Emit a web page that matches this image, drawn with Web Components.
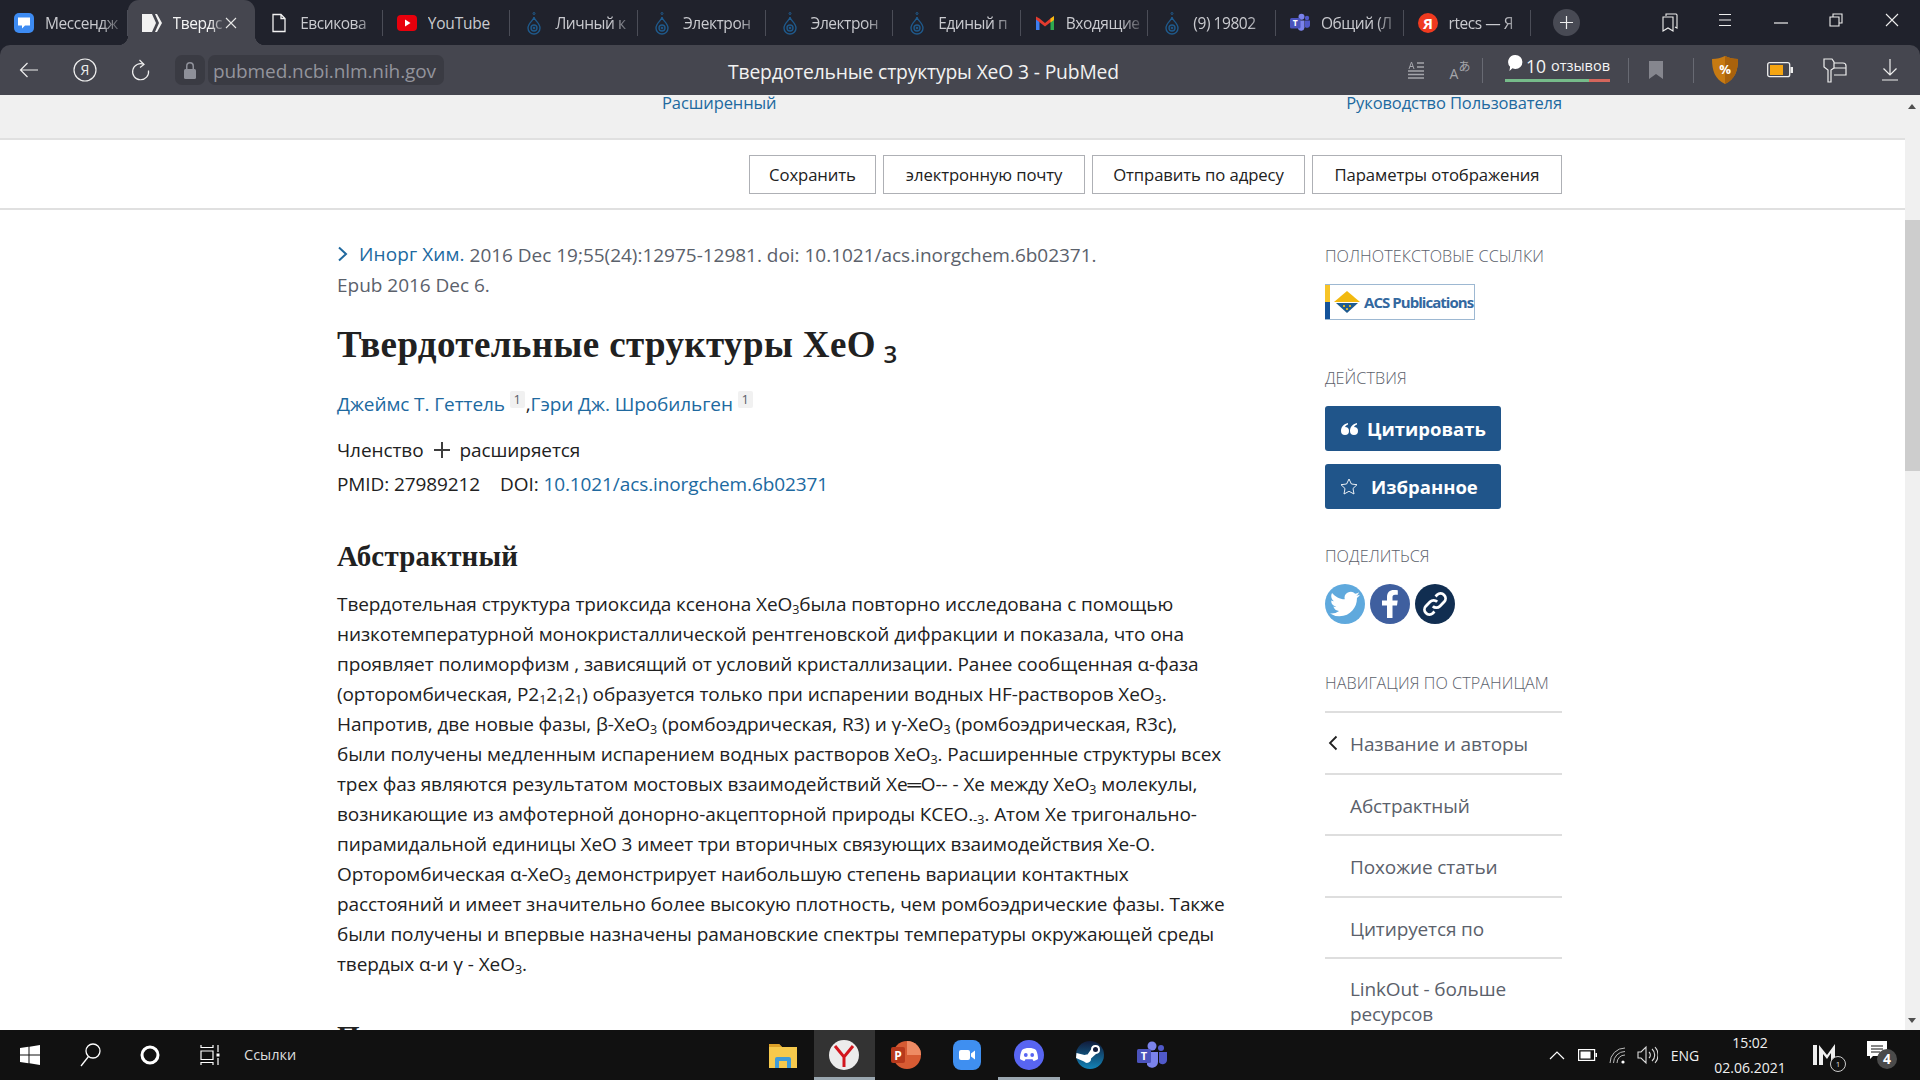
<!DOCTYPE html>
<html lang="ru">
<head>
<meta charset="utf-8">
<title>Твердотельные структуры XeO 3 - PubMed</title>
<style>
  html, body { margin: 0; height: 100%; overflow: hidden; }
  body { display: flex; flex-direction: column; width: 1920px; height: 1080px; font-family: "Open Sans", "Noto Sans", sans-serif; }
  svg { display: block; }
</style>
</head>
<body>

<tab-strip>
  <browser-tab label="Мессендж">
    <svg slot="icon" width="20" height="20" viewBox="0 0 20 20"><rect width="20" height="20" rx="5" fill="#3d8bf2"/><path d="M4 4.500h12v8h-5l-3 3v-3H4z" fill="#fff"/></svg>
  </browser-tab>
  <browser-tab label="Твердс" active>
    <svg slot="icon" width="20" height="20" viewBox="0 0 20 20"><path d="M0 1h10l4 9-4 9H0z" fill="#f2f2f2"/><path d="M13 1h2l5 9-5 9h-2l4-9z" fill="#f2f2f2"/></svg>
  </browser-tab>
  <browser-tab label="Евсикова">
    <svg slot="icon" width="20" height="20" viewBox="0 0 20 20"><path d="M4 1.500h8l4 4v13H4z M12 1.500v4h4" fill="none" stroke="#f2f2f2" stroke-width="1.300"/></svg>
  </browser-tab>
  <browser-tab label="YouTube" plain>
    <svg slot="icon" width="20" height="20" viewBox="0 0 20 20"><rect y="2" width="20" height="16" rx="4" fill="#e8000c"/><path d="M8 6.500l5.500 3.500L8 13.500z" fill="#fff"/></svg>
  </browser-tab>
  <browser-tab label="Личный к"><drop-icon slot="icon"></drop-icon></browser-tab>
  <browser-tab label="Электрон"><drop-icon slot="icon"></drop-icon></browser-tab>
  <browser-tab label="Электрон"><drop-icon slot="icon"></drop-icon></browser-tab>
  <browser-tab label="Единый п"><drop-icon slot="icon"></drop-icon></browser-tab>
  <browser-tab label="Входящие">
    <svg slot="icon" width="20" height="20" viewBox="0 0 20 20"><path d="M1 5v12h3.500V8z" fill="#3d7df0"/><path d="M19 5v12h-3.500V8z" fill="#2fa84f"/><path d="M1 3.500l3.500 2L10 10l5.500-4.500 3.500-2V6.500L10 13.500 1 6.500z" fill="#e33b2e"/><path d="M15.500 5.500L19 3v4l-3.500 2.500z" fill="#f6bb12"/></svg>
  </browser-tab>
  <browser-tab label="(9) 19802"><drop-icon slot="icon"></drop-icon></browser-tab>
  <browser-tab label="Общий (Л">
    <svg slot="icon" width="20" height="20" viewBox="0 0 20 20"><circle cx="11.500" cy="3.800" r="3" fill="#7b83eb"/><circle cx="17" cy="5" r="2.200" fill="#5059c9"/><path d="M8 7.500h6.500v7a3.500 3.500 0 0 1-6.500 1.500z" fill="#7b83eb"/><path d="M15 7.500h5v5a3 3 0 0 1-5 1.500z" fill="#5059c9"/><rect y="5" width="10.500" height="10.500" rx="1.500" fill="#4b53bc"/><text x="5.200" y="13" font-size="8.500" font-weight="700" fill="#fff" text-anchor="middle" font-family="Open Sans">T</text></svg>
  </browser-tab>
  <browser-tab label="rtecs — Я">
    <svg slot="icon" width="20" height="20" viewBox="0 0 20 20"><circle cx="10" cy="10" r="10" fill="#f03a1f"/><text x="10" y="15.500" font-size="15" font-weight="700" fill="#fff" text-anchor="middle" font-family="Open Sans">Я</text></svg>
  </browser-tab>
</tab-strip>

<address-bar title-text="Твердотельные структуры XeO 3 - PubMed" url="pubmed.ncbi.nlm.nih.gov"></address-bar>

<page-viewport>
  <site-header></site-header>
  <action-toolbar>
    <tool-button style="padding:0 19.500px">Сохранить</tool-button>
    <tool-button>электронную почту</tool-button>
    <tool-button style="padding:0 20.300px">Отправить по адресу</tool-button>
    <tool-button>Параметры отображения</tool-button>
  </action-toolbar>
  <article-layout>
    <article-main></article-main>
    <article-side></article-side>
  </article-layout>
</page-viewport>

<task-bar></task-bar>

<script>
// small svg drop used by the portal favicon tabs
class DropIcon extends HTMLElement {
  constructor() {
    super();
    this.attachShadow({ mode: 'open' }).innerHTML = `
      <style>:host { display: block; width: 20px; height: 24px; }</style>
      <svg width="20" height="24" viewBox="0 0 20 24" fill="none" stroke="#1f5a8c" style="display:block">
        <path d="M10 6c0 3 6 6 6 11a6 6 0 0 1-12 0c0-5 6-8 6-11z" stroke-width="1.400"/>
        <circle cx="10" cy="17" r="3" stroke-width="1.400"/>
        <circle cx="10" cy="17" r=".9" fill="#1f5a8c"/>
        <circle cx="10" cy="2.500" r="1" stroke-width="1"/>
      </svg>`;
  }
}

class BrowserTab extends HTMLElement {
  constructor() {
    super();
    this.attachShadow({ mode: 'open' });
  }
  connectedCallback() {
    const active = this.hasAttribute('active');
    this.shadowRoot.innerHTML = `
      <style>
        :host { display: flex; align-items: center; width: 127.6px; height: 45px; box-sizing: border-box; position: relative; flex: none; }
        :host([active]) { background: #45464f; border-radius: 11px 11px 0 0; }
        :host([active])::before, :host([active])::after { content: ''; position: absolute; bottom: 0; width: 10px; height: 10px; }
        :host([active])::before { left: -10px; background: radial-gradient(circle at 0 0, transparent 10px, #45464f 10.500px); }
        :host([active])::after { right: -10px; background: radial-gradient(circle at 100% 0, transparent 10px, #45464f 10.500px); }
        .inner { display: flex; align-items: center; width: 100%; height: 26px; padding-left: 14px; box-sizing: border-box; border-right: 1px solid #4b4d57; }
        :host([active]) .inner { border-right-color: transparent; }
        .icon { width: 22px; flex: none; margin-right: 9px; }
        .label { font-size: 15.500px; color: #c9cacf; white-space: nowrap; overflow: hidden; flex: 1; letter-spacing: -.45px; margin-right: 5px;
          -webkit-mask-image: linear-gradient(90deg, #000 72%, rgba(0,0,0,.2) 100%); mask-image: linear-gradient(90deg, #000 72%, rgba(0,0,0,.2) 100%); }
        :host([plain]) .label { -webkit-mask-image: none; mask-image: none; letter-spacing: -.2px; }
        :host([active]) .label { color: #f4f4f4; margin-right: 1px; }
        .close { flex: none; margin: 0 17px 0 0; }
      </style>
      <div class="inner">
        <div class="icon"><slot name="icon"></slot></div>
        <div class="label">${this.getAttribute('label')}</div>
        ${active ? '<svg class="close" width="12" height="12" viewBox="0 0 12 12" stroke="#e8e8e8" stroke-width="1.100"><path d="M1 1l10 10M11 1L1 11"/></svg>' : ''}
      </div>`;
  }
}

class TabStrip extends HTMLElement {
  constructor() {
    super();
    this.attachShadow({ mode: 'open' }).innerHTML = `
      <style>
        :host { display: flex; align-items: center; height: 45px; background: #20222c; flex: none; }
        .tabs { display: flex; width: 1531px; flex: none; }
        .plus { width: 27px; height: 27px; border-radius: 50%; background: #484a54; margin-left: 22px; display: flex; align-items: center; justify-content: center; flex: none; }
        .win { display: flex; margin-left: 62px; }
        .win div { width: 55.500px; display: flex; justify-content: center; }
      </style>
      <div class="tabs"><slot></slot></div>
      <div class="plus"><svg width="15" height="15" viewBox="0 0 15 15" stroke="#eee" stroke-width="1.200"><path d="M7.500 1v13M1 7.500h13"/></svg></div>
      <div class="win">
        <div><svg width="18" height="20" viewBox="0 0 18 20" fill="none" stroke="#eee" stroke-width="1.100"><path d="M5 3V1h10a2 2 0 0 1 1 1v13l-2-1"/><path d="M2 4h10v14l-5-3-5 3z"/></svg></div>
        <div><svg width="14" height="14" viewBox="0 0 14 14" stroke="#eee" stroke-width="1.100"><path d="M1 1.500h12M1 7h12M1 12.500h12"/></svg></div>
        <div style="padding-top:9px"><svg width="14" height="3" viewBox="0 0 14 3" stroke="#eee" stroke-width="1.200"><path d="M0 1h14"/></svg></div>
        <div><svg width="14" height="14" viewBox="0 0 14 14" fill="none" stroke="#eee" stroke-width="1.100"><path d="M1 4h9v9H1zM4 4V1h9v9h-3"/></svg></div>
        <div><svg width="14" height="14" viewBox="0 0 14 14" stroke="#eee" stroke-width="1.100"><path d="M1 1l12 12M13 1L1 13"/></svg></div>
      </div>`;
  }
}

class AddressBar extends HTMLElement {
  constructor() {
    super();
    this.attachShadow({ mode: 'open' });
  }
  connectedCallback() {
    this.shadowRoot.innerHTML = `
      <style>
        :host { display: flex; align-items: center; height: 50px; background: #20222c; flex: none; }
        .bar { flex: 1; height: 50px; display: flex; align-items: center; background: #45464f; border-radius: 10px 10px 0 0; padding-right: 3px; box-sizing: border-box; }
        .cell { display: flex; justify-content: center; align-items: center; flex: none; }
        .lock { width: 30px; height: 30px; background: #3a3b43; border-radius: 7px; margin: 0 3px 0 7px; }
        .url { width: 236px; height: 30px; background: #3a3b43; border-radius: 7px; color: #93949c; font-size: 19px; line-height: 32px; padding-left: 5px; box-sizing: border-box; white-space: nowrap; flex: none; letter-spacing: -.1px; }
        .title { margin-left: 284px; color: #f2f2f2; font-size: 19.300px; white-space: nowrap; flex: 1; letter-spacing: -.15px; padding-top: 2px; }
        .sep { width: 1px; height: 25px; background: #686a73; flex: none; }
        .reviews { width: 105px; margin: -5px 18px 0 22px; color: #f4f4f4; flex: none; }
        .reviews .t { display: flex; align-items: center; height: 25px; font-size: 14.500px; white-space: nowrap; }
        .reviews b { font-weight: 400; font-size: 17.500px; margin: 0 5px 0 3px; }
        .meter { display: flex; height: 3px; margin-top: 1px; }
        .meter i { display: block; height: 3px; }
      </style>
      <div class="bar">
        <div class="cell" style="width:58px"><svg width="20" height="16" viewBox="0 0 20 16" fill="none" stroke="#eee" stroke-width="1.200"><path d="M19 8H1.500M8.500 1L1.500 8l7 7"/></svg></div>
        <div class="cell" style="width:54px"><svg width="24" height="24" viewBox="0 0 24 24"><circle cx="12" cy="12" r="11" fill="none" stroke="#eee" stroke-width="1.200"/><text x="12" y="17" font-size="14" fill="#eee" text-anchor="middle" font-family="Open Sans">Я</text></svg></div>
        <div class="cell" style="width:56px"><svg width="20" height="22" viewBox="0 0 20 22" fill="none" stroke="#eee" stroke-width="1.200"><path d="M14 5.500a8 8 0 1 0 4.500 6"/><path d="M9.500 1l4.500 4.500-4 3"/></svg></div>
        <div class="cell lock"><svg width="14" height="18" viewBox="0 0 14 18" fill="#8e9099"><path d="M3 8V5a4 4 0 0 1 8 0v3h-1.500V5a2.500 2.500 0 0 0-5 0v3z"/><rect x="1" y="8" width="12" height="10" rx="1.500"/></svg></div>
        <div class="url">${this.getAttribute('url')}</div>
        <div class="title">${this.getAttribute('title-text')}</div>
        <div class="cell" style="width:41px"><svg width="18" height="18" viewBox="0 0 18 18" stroke="#a4a5ab" stroke-width="1.300" fill="none"><path d="M10 2h7M10 6h7M1 10h16M1 13.500h16M1 17h16"/><path d="M2 8l2.500-7L7 8M3 5.500h3" stroke-width="1"/></svg></div>
        <div class="cell" style="width:46px"><svg width="26" height="30" viewBox="0 0 26 30"><text x="8" y="24" font-size="14" fill="#a4a5ab" text-anchor="middle" font-family="Open Sans">A</text><text x="18.500" y="16" font-size="12" fill="#a4a5ab" text-anchor="middle" font-family="Noto Sans CJK JP">あ</text></svg></div>
        <div class="sep"></div>
        <div class="reviews">
          <div class="t"><svg width="15" height="17" viewBox="0 0 15 17" fill="#fff" style="margin-left:3px;margin-top:-4px"><path d="M7.500 0a7 7 0 0 1 0 14c-1 0-2-.2-3-.6L1.500 16l.6-4.200A7 7 0 0 1 7.500 0z"/></svg><b>10</b>отзывов</div>
          <div class="meter"><i style="width:84px;background:#76bb8a"></i><i style="width:21px;background:#d4665c"></i></div>
        </div>
        <div class="sep"></div>
        <div class="cell" style="width:64px;padding-right:10px;box-sizing:border-box"><svg width="14" height="18" viewBox="0 0 14 18" fill="#85868e"><path d="M0 0h14v18l-7-5-7 5z"/></svg></div>
        <div class="sep" style="margin-right:3px"></div>
        <div class="cell" style="width:55px"><svg width="26" height="28" viewBox="0 0 26 28"><path d="M13 0c4 2 8 3 13 3 0 12-3 20-13 25C3 23 0 15 0 3c5 0 9-1 13-3z" fill="#c77a12"/><path d="M13 0c4 2 8 3 13 3 0 12-3 20-13 25z" fill="#a9620c"/><text x="13" y="18" font-size="13" font-weight="700" fill="#fff" text-anchor="middle" font-family="Open Sans">%</text></svg></div>
        <div class="cell" style="width:55px"><svg width="26" height="16" viewBox="0 0 26 16"><rect x=".7" y=".7" width="22" height="14" rx="2" fill="none" stroke="#eee" stroke-width="1.300"/><rect x="3" y="3" width="13" height="10" fill="#f5a511"/><rect x="23.500" y="5" width="2.500" height="6" fill="#eee"/></svg></div>
        <div class="cell" style="width:55px"><svg width="24" height="26" viewBox="0 0 24 26" fill="none" stroke="#eee" stroke-width="1.200"><path d="M1 2h8l2 3v6l-3 2v12H5V13L1 10z"/><path d="M11 6h9a3 3 0 0 1 3 3v9h-12M11 11h12"/></svg></div>
        <div class="cell" style="width:55px"><svg width="16" height="22" viewBox="0 0 16 22" fill="none" stroke="#eee" stroke-width="1.200"><path d="M8 0v16M1.500 9.500L8 16l6.500-6.500M0 21h16"/></svg></div>
      </div>`;
  }
}

class PageViewport extends HTMLElement {
  constructor() {
    super();
    this.attachShadow({ mode: 'open' }).innerHTML = `
      <style>
        :host { display: flex; height: 935px; flex: none; overflow: hidden; background: #fff; }
        .content { width: 1905px; flex: none; overflow: hidden; }
        .bar { width: 15px; background: #f0f0f0; position: relative; padding-top: 125px; box-sizing: border-box; }
        .thumb { height: 251px; background: #cdcdcd; }
        .up, .down { position: absolute; left: 3px; width: 0; height: 0; border-left: 4.500px solid transparent; border-right: 4.500px solid transparent; }
        .up { top: 9px; border-bottom: 5px solid #505050; }
        .down { bottom: 7px; border-top: 5px solid #505050; }
      </style>
      <div class="content"><slot></slot></div>
      <div class="bar"><div class="up"></div><div class="thumb"></div><div class="down"></div></div>`;
  }
}

class SiteHeader extends HTMLElement {
  constructor() {
    super();
    this.attachShadow({ mode: 'open' }).innerHTML = `
      <style>
        :host { display: flex; height: 43px; background: #f0f0f0; border-bottom: 2px solid #e0e0e0; font-size: 16.500px; letter-spacing: -.1px; }
        a { color: #20699f; text-decoration: none; line-height: 15px; white-space: nowrap; }
        .adv { margin-left: 662px; }
        .guide { margin-left: auto; margin-right: 343px; }
      </style>
      <a class="adv">Расширенный</a>
      <a class="guide">Руководство Пользователя</a>`;
  }
}

class ActionToolbar extends HTMLElement {
  constructor() {
    super();
    this.attachShadow({ mode: 'open' }).innerHTML = `
      <style>
        :host { display: flex; justify-content: flex-end; align-items: flex-start; gap: 7px; height: 70px; padding: 15px 343px 0 0; box-sizing: border-box; border-bottom: 2px solid #e0e0e0; background: #fff; }
      </style>
      <slot></slot>`;
  }
}

class ToolButton extends HTMLElement {
  constructor() {
    super();
    this.attachShadow({ mode: 'open' }).innerHTML = `
      <style>
        :host { display: flex; align-items: center; height: 39px; padding: 0 21.500px; box-sizing: border-box; border: 1px solid #aeb0b5; color: #212121; font-size: 16.700px; white-space: nowrap; letter-spacing: -.1px; }
      </style>
      <slot></slot>`;
  }
}

class ArticleLayout extends HTMLElement {
  constructor() {
    super();
    this.attachShadow({ mode: 'open' }).innerHTML = `
      <style>
        :host { display: grid; grid-template-columns: 888px 237px; column-gap: 100px; padding: 29px 0 0 337px; }
      </style>
      <slot></slot>`;
  }
}

class ArticleMain extends HTMLElement {
  constructor() {
    super();
    this.attachShadow({ mode: 'open' }).innerHTML = `
      <style>
        :host { display: block; color: #212121; font-size: 19px; line-height: 30px; letter-spacing: -.08px; white-space: nowrap; }
        a { color: #20699f; text-decoration: none; }
        .cit { color: #5b616b; letter-spacing: -.02px; }
        .cit a { display: inline-flex; align-items: center; gap: 11px; letter-spacing: .1px; }
        h1 { font: 700 37px/40px "Liberation Serif", serif; letter-spacing: .38px; color: #212121; margin: 25px 0 0; }
        h1 sub { font-size: 24px; font-weight: 600; font-family: "Open Sans", sans-serif; vertical-align: -6px; line-height: 0; letter-spacing: 0; margin-left: -2px; }
        .authors { margin-top: 24px; }
        .authors sup { display: inline-block; vertical-align: 7px; font-size: 13px; line-height: 17px; width: 15px; text-align: center; background: #f1f1f1; color: #5b616b; margin: 0 1px 0 0; border-radius: 2px; letter-spacing: 0; }
        .aff { margin-top: 16px; display: flex; align-items: center; }
        .aff svg { margin: 0 9px 0 11px; display: block; }
        .ids { margin-top: 4px; letter-spacing: -.1px; }
        .ids span { margin-left: 20px; }
        h2 { font: 700 29px/32px "Liberation Serif", serif; color: #212121; margin: 41px 0 17px; letter-spacing: .2px; }
        h2.next { margin-top: 41px; }
        sub.s { font-size: 12.500px; line-height: 0; vertical-align: -3px; letter-spacing: 0; }
      </style>
      <div class="cit"><a><svg width="11" height="16" viewBox="0 0 11 16" fill="none" stroke="#20699f" stroke-width="2"><path d="M2 1.500l7 6.500-7 6.500"/></svg>Инорг Хим.</a> 2016 Dec 19;55(24):12975-12981. doi: 10.1021/acs.inorgchem.6b02371.<br>Epub 2016 Dec 6.</div>
      <h1>Твердотельные структуры XeO <sub>3</sub></h1>
      <div class="authors"><a>Джеймс Т. Геттель</a> <sup>1</sup>,<a>Гэри Дж. Шробильген</a> <sup>1</sup></div>
      <div class="aff">Членство<svg width="16" height="16" viewBox="0 0 16 16" stroke="#3d3d3d" stroke-width="2"><path d="M8 0v16M0 8h16"/></svg>расширяется</div>
      <div class="ids">PMID: 27989212<span>DOI: <a>10.1021/acs.inorgchem.6b02371</a></span></div>
      <h2>Абстрактный</h2>
      <div>Твердотельная структура триоксида ксенона XeO<sub class="s">3</sub>была повторно исследована с помощью<br>
низкотемпературной монокристаллической рентгеновской дифракции и показала, что она<br>
проявляет полиморфизм , зависящий от условий кристаллизации. Ранее сообщенная α-фаза<br>
(орторомбическая, P2<sub class="s">1</sub>2<sub class="s">1</sub>2<sub class="s">1</sub>) образуется только при испарении водных HF-растворов XeO<sub class="s">3</sub>.<br>
Напротив, две новые фазы, β-XeO<sub class="s">3</sub> (ромбоэдрическая, R3) и γ-XeO<sub class="s">3</sub> (ромбоэдрическая, R3c),<br>
были получены медленным испарением водных растворов XeO<sub class="s">3</sub>. Расширенные структуры всех<br>
трех фаз являются результатом мостовых взаимодействий Xe═O-- - Xe между XeO<sub class="s">3</sub> молекулы,<br>
возникающие из амфотерной донорно-акцепторной природы КСЕО.<sub class="s">-3</sub>. Атом Xe тригонально-<br>
пирамидальной единицы XeO 3 имеет три вторичных связующих взаимодействия Xe-O.<br>
Орторомбическая α-XeO<sub class="s">3</sub> демонстрирует наибольшую степень вариации контактных<br>
расстояний и имеет значительно более высокую плотность, чем ромбоэдрические фазы. Также<br>
были получены и впервые назначены рамановские спектры температуры окружающей среды<br>
твердых α-и γ - XeO<sub class="s">3</sub>.</div>
      <h2 class="next">Похожие статьи</h2>`;
  }
}

class ArticleSide extends HTMLElement {
  constructor() {
    super();
    this.attachShadow({ mode: 'open' }).innerHTML = `
      <style>
        :host { display: block; font-size: 19px; color: #5b616b; letter-spacing: -.12px; }
        h3 { font-size: 16.200px; font-weight: 300; line-height: 20px; margin: 0; text-transform: uppercase; color: #5b616b; letter-spacing: .05px; white-space: nowrap; }
        .acs { display: flex; align-items: center; width: 150px; height: 36px; margin: 18px 0 48px; box-sizing: border-box; border: 1px solid #9db8d2; border-left: 0; background: linear-gradient(#f7c427 50%, #14539a 50%) left / 5px 100% no-repeat; padding-left: 9px; gap: 4px; }
        .acs span { font-size: 15px; font-weight: 700; color: #33689f; letter-spacing: -.95px; white-space: nowrap; }
        .btn { display: flex; align-items: center; width: 176px; height: 45px; background: #20558a; color: #fff; border-radius: 3px; font-size: 18.500px; font-weight: 700; box-sizing: border-box; letter-spacing: 0; }
        .share { display: flex; gap: 5px; margin-top: 18px; }
        .circle { width: 40px; height: 40px; border-radius: 50%; display: flex; align-items: center; justify-content: center; }
        .nav { margin-top: 18px; border-top: 2px solid #dedede; }
        .nav div { border-bottom: 2px solid #dedede; height: 61.500px; padding: 3px 0 0 25px; box-sizing: border-box; display: flex; align-items: center; position: relative; }
        .nav div:last-child { border: 0; height: auto; padding-top: 18px; line-height: 25px; display: block; }
        .nav svg { position: absolute; left: 3px; top: 22px; }
      </style>
      <h3 style="margin-top:7px">Полнотекстовые ссылки</h3>
      <div class="acs">
        <svg width="26" height="24" viewBox="0 0 26 24" style="display:block;flex:none"><path d="M13 1l13 11H0z" fill="#f2b90f"/><path d="M2 13h22L13 23z" fill="#1f5b8f"/><path d="M9 15h2v2H9zM15 15h2v2h-2zM12 18h2v2h-2z" fill="#d9b52a"/></svg>
        <span>ACS Publications</span>
      </div>
      <h3>Действия</h3>
      <div class="btn" style="margin-top:18px"><svg width="18" height="14" viewBox="0 0 18 14" fill="#fff" style="margin:0 9px 0 15px;display:block"><path d="M8 1C4 2 1 4.500 1 9a4 4 0 1 0 4-4c.5-1.300 1.500-2 3-2.500zM17 1c-4 1-7 3.500-7 8a4 4 0 1 0 4-4c.5-1.300 1.500-2 3-2.500z"/></svg>Цитировать</div>
      <div class="btn" style="margin-top:13px"><svg width="18" height="17" viewBox="0 0 18 17" fill="none" stroke="#fff" stroke-width=".9" style="margin:0 13px 0 15px;display:block"><path d="M9 1l2.400 5 5.600.7-4 3.800 1 5.500L9 13.300 4 16l1-5.500-4-3.800L6.600 6z"/></svg>Избранное</div>
      <h3 style="margin-top:37px">Поделиться</h3>
      <div class="share">
        <div class="circle" style="background:#5fa9dd"><svg width="30" height="30" viewBox="0 0 24 24" fill="#fff" style="display:block"><path d="M23.953 4.570a10 10 0 01-2.825.775 4.958 4.958 0 002.163-2.723c-.951.555-2.005.959-3.127 1.184a4.920 4.920 0 00-8.384 4.482C7.690 8.095 4.067 6.130 1.640 3.162a4.822 4.822 0 00-.666 2.475c0 1.710.870 3.213 2.188 4.096a4.904 4.904 0 01-2.228-.616v.060a4.923 4.923 0 003.946 4.827 4.996 4.996 0 01-2.212.085 4.936 4.936 0 004.604 3.417 9.867 9.867 0 01-6.102 2.105c-.390 0-.779-.023-1.170-.067a13.995 13.995 0 007.557 2.209c9.053 0 13.998-7.496 13.998-13.985 0-.210 0-.420-.015-.630A9.935 9.935 0 0024 4.590z"/></svg></div>
        <div class="circle" style="background:#3f5f9f"><svg width="16" height="28" viewBox="0 0 16 28" fill="#fff" style="display:block"><path d="M5 28V15.500H0V10.500h5V7c0-4.500 2.700-7 6.800-7 1.900 0 3.400.1 4 .2v4.500h-2.700C11 4.700 10.500 5.700 10.500 7.300v3.200h5.200l-.7 5h-4.500V28z"/></svg></div>
        <div class="circle" style="background:#112e51"><svg width="26" height="26" viewBox="0 0 24 24" fill="none" stroke="#fff" stroke-width="2.600" style="display:block"><path d="M10 14a4.500 4.500 0 0 0 6.500 0l4-4A4.600 4.600 0 0 0 14 3.500l-1.500 1.500"/><path d="M14 10a4.500 4.500 0 0 0-6.500 0l-4 4a4.600 4.600 0 0 0 6.500 6.500l1.500-1.500"/></svg></div>
      </div>
      <h3 style="margin-top:49px">Навигация по страницам</h3>
      <div class="nav">
        <div><svg width="10" height="16" viewBox="0 0 10 16" fill="none" stroke="#212121" stroke-width="1.800" style="display:block"><path d="M8.500 1.500L2 8l6.500 6.500"/></svg>Название и авторы</div>
        <div>Абстрактный</div>
        <div>Похожие статьи</div>
        <div>Цитируется по</div>
        <div>LinkOut - больше<br>ресурсов</div>
      </div>`;
  }
}

class TaskBar extends HTMLElement {
  constructor() {
    super();
    this.attachShadow({ mode: 'open' }).innerHTML = `
      <style>
        :host { display: grid; grid-template-columns: 752px auto 1fr; height: 50px; background: #111; color: #f0f0f0; flex: none; font-size: 14px; }
        .left, .apps, .tray { display: flex; align-items: center; height: 50px; }
        .cell { width: 60px; height: 50px; display: flex; align-items: center; justify-content: center; flex: none; box-sizing: border-box; }
        .links { margin: -2px 0 0 4px; color: #ddd; font-size: 14.500px; }
        .app { width: 61.500px; border-bottom: 3px solid transparent; padding-top: 3px; }
        .app.on { background: #333; border-bottom-color: #9aa7b0; }
        .app.run { border-bottom-color: #9aa7b0; }
        .tray { justify-content: flex-end; }
        .t { width: 30px; }
        .eng { width: 46px; text-align: center; font-size: 14px; }
        .clock { width: 84px; margin-right: 8px; text-align: center; line-height: 25px; font-size: 14px; }
      </style>
      <div class="left">
        <div class="cell"><svg width="20" height="20" viewBox="0 0 20 20" fill="#fff" style="display:block"><path d="M0 3l8.500-1.200V9.500H0zM9.500 1.700L20 0v9.500H9.500zM0 10.500h8.500v7.700L0 17zM9.500 10.500H20V20L9.500 18.300z"/></svg></div>
        <div class="cell"><svg width="21" height="24" viewBox="0 0 21 24" fill="none" stroke="#fff" stroke-width="1.300" style="display:block"><circle cx="13" cy="8" r="7"/><path d="M8.500 13.500L1 23"/></svg></div>
        <div class="cell"><svg width="20" height="20" viewBox="0 0 20 20" fill="none" stroke="#fff" stroke-width="3" style="display:block"><circle cx="10" cy="10" r="8"/></svg></div>
        <div class="cell"><svg width="20" height="22" viewBox="0 0 20 22" fill="none" stroke="#fff" stroke-width="1.200" style="display:block"><path d="M1 1v2.500h12V1M1 7h12v8.500H1zM1 21v-2.500h12V21M18 1v7M18 14v7"/><rect x="16.500" y="9.500" width="3" height="3" fill="#fff" stroke="none"/></svg></div>
        <div class="links">Ссылки</div>
      </div>
      <div class="apps">
        <div class="cell app"><svg width="28" height="26" viewBox="0 0 28 26" style="display:block"><path d="M0 2h10l3 3h15v21H0z" fill="#f6c94c"/><path d="M0 2h10l3 3H0z" fill="#dca028"/><path d="M6 26v-9a2 2 0 0 1 2-2h12a2 2 0 0 1 2 2v9h-4v-7h-8v7z" fill="#3f9bd8"/></svg></div>
        <div class="cell app on"><svg width="30" height="30" viewBox="0 0 30 30" style="display:block"><circle cx="15" cy="15" r="15" fill="#ececec"/><path d="M6 6l9 11 9-11M15 17v10" fill="none" stroke="#d2161e" stroke-width="3"/></svg></div>
        <div class="cell app"><svg width="30" height="30" viewBox="0 0 30 30" style="display:block"><circle cx="16" cy="15" r="14" fill="#d75b33"/><path d="M16 1a14 14 0 0 1 14 14H16z" fill="#ee8b64"/><rect y="7" width="14" height="16" rx="2" fill="#b7391c"/><text x="7" y="20" font-size="12" font-weight="700" fill="#fff" text-anchor="middle" font-family="Open Sans">P</text></svg></div>
        <div class="cell app"><svg width="28" height="30" viewBox="0 0 28 30" style="display:block"><rect width="28" height="30" rx="8" fill="#3f8ff0"/><rect x="6" y="10" width="11" height="10" rx="2" fill="#fff"/><path d="M18 13.500l4-3v9l-4-3z" fill="#fff"/></svg></div>
        <div class="cell app run"><svg width="30" height="30" viewBox="0 0 30 30" style="display:block"><circle cx="15" cy="15" r="15" fill="#5865f2"/><path d="M8 10c2-1.500 4-2 7-2s5 .5 7 2c1.500 3 2 6 2 9-1.500 1.200-3 1.800-4.500 2l-1-1.800H11.500L10.500 21C9 20.800 7.500 20.200 6 19c0-3 .5-6 2-9z" fill="#fff"/><circle cx="11.800" cy="15" r="1.900" fill="#5865f2"/><circle cx="18.200" cy="15" r="1.900" fill="#5865f2"/></svg></div>
        <div class="cell app"><svg width="28" height="30" viewBox="0 0 28 30" style="display:block"><defs><linearGradient id="st" x1="0" y1="0" x2="0" y2="1"><stop offset="0" stop-color="#111b3a"/><stop offset="1" stop-color="#1384b8"/></linearGradient></defs><circle cx="14" cy="15" r="14" fill="url(#st)"/><path d="M0 18l8 3.500a4 4 0 0 0 7-3L20 14a4.500 4.500 0 1 0-5-4.500l-3.500 5a4 4 0 0 0-3 .5L.5 13z" fill="#fff"/><circle cx="19.500" cy="9.500" r="2.500" fill="#111b3a"/></svg></div>
        <div class="cell app"><svg width="30" height="28" viewBox="0 0 30 28" style="display:block"><circle cx="15" cy="5" r="4.500" fill="#7b83eb"/><circle cx="24" cy="7" r="3" fill="#5059c9"/><path d="M10 11h11v10a6 6 0 0 1-11 3z" fill="#7b83eb"/><path d="M22 11h8v8a4.500 4.500 0 0 1-8 2.500z" fill="#5059c9"/><rect y="8" width="14" height="14" rx="1.500" fill="#4b53bc"/><text x="7" y="19" font-size="11" font-weight="700" fill="#fff" text-anchor="middle" font-family="Open Sans">T</text></svg></div>
      </div>
      <div class="tray">
        <div class="cell t"><svg width="16" height="9" viewBox="0 0 16 9" fill="none" stroke="#fff" stroke-width="1.200" style="display:block"><path d="M1 8l7-7 7 7"/></svg></div>
        <div class="cell t"><svg width="19" height="12" viewBox="0 0 19 12" style="display:block"><rect x=".6" y=".6" width="16" height="10.800" fill="none" stroke="#fff" stroke-width="1.200"/><rect x="2.500" y="2.500" width="10" height="7" fill="#fff"/><rect x="17.500" y="4" width="1.500" height="4" fill="#fff"/></svg></div>
        <div class="cell t"><svg width="17" height="17" viewBox="0 0 17 17" fill="none" stroke="#bbb" stroke-width="1" style="display:block"><path d="M1 16A15 15 0 0 1 16 1M4.500 16A11.500 11.500 0 0 1 16 4.500M8 16a8 8 0 0 1 8-8"/><circle cx="14" cy="15" r="1.600" fill="#fff" stroke="none"/></svg></div>
        <div class="cell t"><svg width="21" height="20" viewBox="0 0 21 20" fill="none" stroke="#ddd" stroke-width="1.100" style="display:block"><path d="M1 7h3l5-5v16l-5-5H1zM12 7a4 4 0 0 1 0 6M15 4a8 8 0 0 1 0 12M18 2a12 12 0 0 1 0 16"/></svg></div>
        <div class="eng">ENG</div>
        <div class="clock">15:02<br>02.06.2021</div>
        <div class="cell" style="width:60px"><svg width="38" height="34" viewBox="0 0 38 34" style="display:block"><path d="M2 7h4v20H2zM8 27V7l8 10 8-11v21h-4V15l-4 6-4-5v11z" fill="#eee"/><circle cx="27" cy="26" r="7.500" fill="#111" stroke="#ccc" stroke-width="1"/><text x="27" y="29" font-size="8" fill="#ddd" text-anchor="middle" font-family="Open Sans">1</text></svg></div>
        <div class="cell" style="width:44px"><svg width="32" height="32" viewBox="0 0 32 32" style="display:block"><path d="M1 2h20v15H7l-3 3v-3H1z" fill="#fff"/><path d="M5 7h12M5 10h12M5 13h9" stroke="#111" stroke-width="1.200"/><circle cx="21" cy="20" r="10" fill="#4b4b4b"/><text x="21" y="25" font-size="14" font-weight="700" fill="#fff" text-anchor="middle" font-family="Open Sans">4</text></svg></div>
        <div style="width:16px"></div>
      </div>`;
  }
}

customElements.define('drop-icon', DropIcon);
customElements.define('browser-tab', BrowserTab);
customElements.define('tab-strip', TabStrip);
customElements.define('address-bar', AddressBar);
customElements.define('page-viewport', PageViewport);
customElements.define('site-header', SiteHeader);
customElements.define('action-toolbar', ActionToolbar);
customElements.define('tool-button', ToolButton);
customElements.define('article-layout', ArticleLayout);
customElements.define('article-main', ArticleMain);
customElements.define('article-side', ArticleSide);
customElements.define('task-bar', TaskBar);
</script>
</body>
</html>
